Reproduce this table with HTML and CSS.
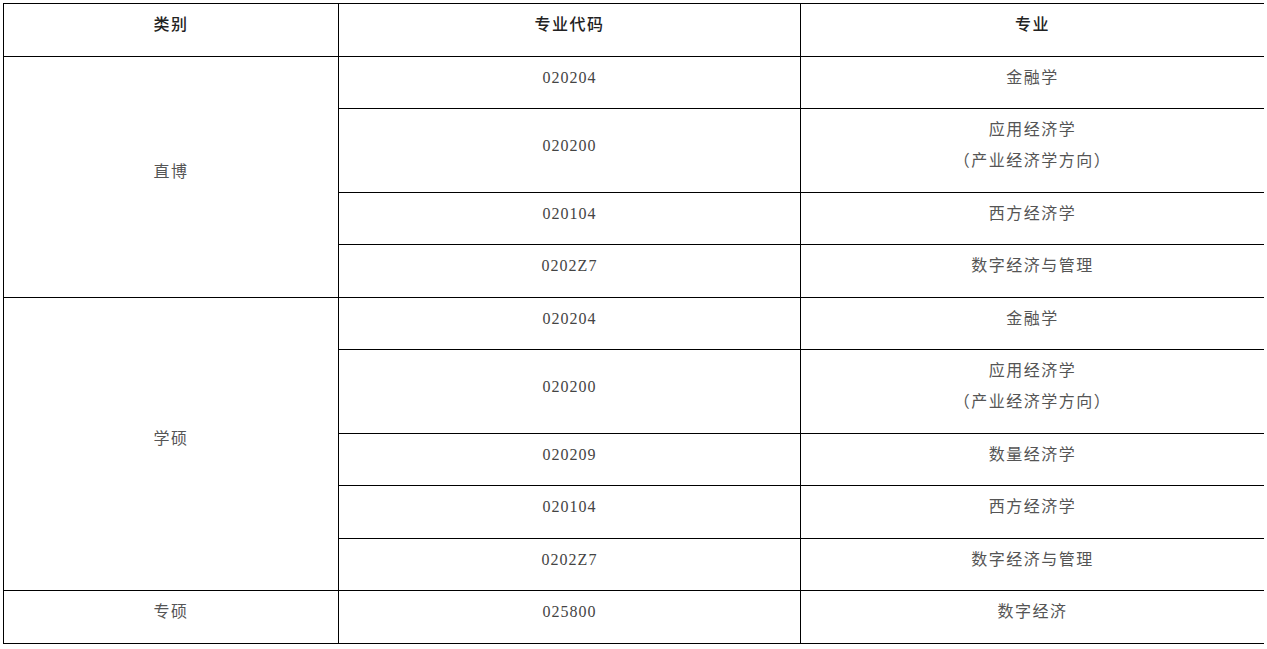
FILE: index.html
```html
<!DOCTYPE html>
<html lang="zh">
<head>
<meta charset="utf-8">
<title>招生专业</title>
<link rel="stylesheet" href="styles.css">
</head>
<body>
<table class="majors">
  <colgroup>
    <col class="c-type">
    <col class="c-code">
    <col class="c-name">
  </colgroup>
  <thead>
    <tr><th>类别</th><th>专业代码</th><th>专业</th></tr>
  </thead>
  <tbody>
    <tr><td rowspan="4">直博</td><td class="code">020204</td><td>金融学</td></tr>
    <tr><td class="code">020200</td><td>应用经济学<br>（产业经济学方向）</td></tr>
    <tr><td class="code">020104</td><td>西方经济学</td></tr>
    <tr><td class="code">0202Z7</td><td>数字经济与管理</td></tr>
    <tr><td rowspan="5">学硕</td><td class="code">020204</td><td>金融学</td></tr>
    <tr><td class="code">020200</td><td>应用经济学<br>（产业经济学方向）</td></tr>
    <tr><td class="code">020209</td><td>数量经济学</td></tr>
    <tr><td class="code">020104</td><td>西方经济学</td></tr>
    <tr><td class="code">0202Z7</td><td>数字经济与管理</td></tr>
    <tr><td>专硕</td><td class="code">025800</td><td>数字经济</td></tr>
  </tbody>
</table>
</body>
</html>
```
FILE: styles.css
```css
body {
  margin: 3px;
  background: #fff;
  font-family: "Liberation Serif", "Noto Sans CJK SC", serif;
}
.majors {
  border-collapse: collapse;
  table-layout: fixed;
  width: 1261px;
}
.c-type { width: 335px; }
.c-code { width: 462px; }
.c-name { width: 464px; }
.majors th,
.majors td {
  border: 1px solid #000;
  padding: 5px 10px 15.5px;
  line-height: 31px;
  font-size: 16px;
  letter-spacing: 1.5px;
  text-align: center;
  vertical-align: middle;
  color: #555;
  font-weight: normal;
}
.majors td.code {
  letter-spacing: 1px;
  color: #444;
}
.majors th {
  color: #222;
  font-weight: 500;
}
```
